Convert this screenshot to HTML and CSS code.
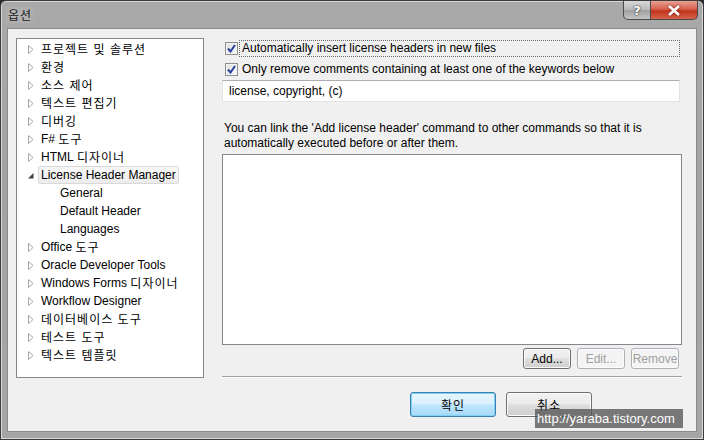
FILE: index.html
```html
<!DOCTYPE html>
<html lang="ko">
<head>
<meta charset="utf-8">
<link rel="stylesheet" href="styles.css">
</head>
<body>
<div class="window">
  <div class="titlebar">
    <span class="title ko">옵션</span>
    <div class="caption">
      <div class="cbtn help">?</div>
      <div class="cbtn close"><svg width="14" height="11" viewBox="0 0 14 11"><path d="M2 1 L12 10 M12 1 L2 10" stroke="#fff" stroke-width="2.6" fill="none"/></svg></div>
    </div>
  </div>
  <div class="client">
    <div class="main">
      <div class="tree">
        <div class="row"><span class="arr"><svg width="6" height="9" viewBox="0 0 6 9"><path d="M0.5 0.5 L5 4.5 L0.5 8.5 Z" fill="#fff" stroke="#a6a6a6"/></svg></span><span class="ko">프로젝트 및 솔루션</span></div>
        <div class="row"><span class="arr"><svg width="6" height="9" viewBox="0 0 6 9"><path d="M0.5 0.5 L5 4.5 L0.5 8.5 Z" fill="#fff" stroke="#a6a6a6"/></svg></span><span class="ko">환경</span></div>
        <div class="row"><span class="arr"><svg width="6" height="9" viewBox="0 0 6 9"><path d="M0.5 0.5 L5 4.5 L0.5 8.5 Z" fill="#fff" stroke="#a6a6a6"/></svg></span><span class="ko">소스 제어</span></div>
        <div class="row"><span class="arr"><svg width="6" height="9" viewBox="0 0 6 9"><path d="M0.5 0.5 L5 4.5 L0.5 8.5 Z" fill="#fff" stroke="#a6a6a6"/></svg></span><span class="ko">텍스트 편집기</span></div>
        <div class="row"><span class="arr"><svg width="6" height="9" viewBox="0 0 6 9"><path d="M0.5 0.5 L5 4.5 L0.5 8.5 Z" fill="#fff" stroke="#a6a6a6"/></svg></span><span class="ko">디버깅</span></div>
        <div class="row"><span class="arr"><svg width="6" height="9" viewBox="0 0 6 9"><path d="M0.5 0.5 L5 4.5 L0.5 8.5 Z" fill="#fff" stroke="#a6a6a6"/></svg></span>F#&nbsp;<span class="ko">도구</span></div>
        <div class="row"><span class="arr"><svg width="6" height="9" viewBox="0 0 6 9"><path d="M0.5 0.5 L5 4.5 L0.5 8.5 Z" fill="#fff" stroke="#a6a6a6"/></svg></span>HTML&nbsp;<span class="ko">디자이너</span></div>
        <div class="row"><span class="arr"><svg width="6" height="9" viewBox="0 0 6 9"><path d="M5.5 2 L5.5 7.5 L0 7.5 Z" fill="#404040"/></svg></span><span class="sel">License Header Manager</span></div>
        <div class="row sub">General</div>
        <div class="row sub">Default Header</div>
        <div class="row sub">Languages</div>
        <div class="row"><span class="arr"><svg width="6" height="9" viewBox="0 0 6 9"><path d="M0.5 0.5 L5 4.5 L0.5 8.5 Z" fill="#fff" stroke="#a6a6a6"/></svg></span>Office&nbsp;<span class="ko">도구</span></div>
        <div class="row"><span class="arr"><svg width="6" height="9" viewBox="0 0 6 9"><path d="M0.5 0.5 L5 4.5 L0.5 8.5 Z" fill="#fff" stroke="#a6a6a6"/></svg></span>Oracle Developer Tools</div>
        <div class="row"><span class="arr"><svg width="6" height="9" viewBox="0 0 6 9"><path d="M0.5 0.5 L5 4.5 L0.5 8.5 Z" fill="#fff" stroke="#a6a6a6"/></svg></span>Windows Forms&nbsp;<span class="ko">디자이너</span></div>
        <div class="row"><span class="arr"><svg width="6" height="9" viewBox="0 0 6 9"><path d="M0.5 0.5 L5 4.5 L0.5 8.5 Z" fill="#fff" stroke="#a6a6a6"/></svg></span>Workflow Designer</div>
        <div class="row"><span class="arr"><svg width="6" height="9" viewBox="0 0 6 9"><path d="M0.5 0.5 L5 4.5 L0.5 8.5 Z" fill="#fff" stroke="#a6a6a6"/></svg></span><span class="ko">데이터베이스 도구</span></div>
        <div class="row"><span class="arr"><svg width="6" height="9" viewBox="0 0 6 9"><path d="M0.5 0.5 L5 4.5 L0.5 8.5 Z" fill="#fff" stroke="#a6a6a6"/></svg></span><span class="ko">테스트 도구</span></div>
        <div class="row"><span class="arr"><svg width="6" height="9" viewBox="0 0 6 9"><path d="M0.5 0.5 L5 4.5 L0.5 8.5 Z" fill="#fff" stroke="#a6a6a6"/></svg></span><span class="ko">텍스트 템플릿</span></div>
      </div>
      <div class="panel">
        <div class="check focus"><span class="cb"><svg width="9" height="9" viewBox="0 0 9 9"><path d="M1 4.5 L3.5 7.5 L8 1" stroke="#2b3f9e" stroke-width="2" fill="none"/></svg></span><span class="lbl">Automatically insert license headers in new files</span></div>
        <div class="check"><span class="cb"><svg width="9" height="9" viewBox="0 0 9 9"><path d="M1 4.5 L3.5 7.5 L8 1" stroke="#2b3f9e" stroke-width="2" fill="none"/></svg></span><span class="lbl">Only remove comments containing at least one of the keywords below</span></div>
        <div class="textbox">license, copyright, (c)</div>
        <p class="desc">You can link the 'Add license header' command to other commands so that it is automatically executed before or after them.</p>
        <div class="list"></div>
        <div class="listbtns">
          <div class="btn">Add...</div>
          <div class="btn disabled">Edit...</div>
          <div class="btn disabled">Remove</div>
        </div>
        <div class="sep"></div>
      </div>
    </div>
    <div class="footer">
      <div class="btn big default"><span class="ko">확인</span></div>
      <div class="btn big"><span class="ko">취소</span></div>
    </div>
  </div>
  <div class="watermark">http://yaraba.tistory.com</div>
</div>
</body>
</html>
```

FILE: styles.css
```css
* { box-sizing: border-box; }
html, body { margin: 0; padding: 0; }
body {
  width: 704px; height: 440px; overflow: hidden;
  font-family: "Liberation Sans", "Noto Sans CJK KR", sans-serif;
  font-size: 12px; color: #000;
  background: #2a2a2a;
}
.ko { font-family: "Noto Sans CJK KR", sans-serif; letter-spacing: 1px; }
.window {
  position: relative;
  width: 704px; height: 440px;
  display: flex; flex-direction: column;
  padding: 0 6px 7px 6px;
  background: linear-gradient(180deg, #a9a9a9 0%, #a3a3a3 40%, #a6a6a6 100%);
  border: 1px solid #3c3c3c;
  border-radius: 6px 6px 0 0;
  box-shadow: inset 0 0 0 1px #d8d8d8;
}
.titlebar {
  height: 27px; flex: none;
  display: flex; align-items: flex-start;
}
.title {
  margin: 5px 0 0 1px;
  font-size: 12px; color: #1a1a1a;
  text-shadow: 0 0 6px #e0e0e0;
}
.caption { margin-left: auto; display: flex; margin-right: -1px; }
.cbtn {
  height: 19px;
  display: flex; align-items: center; justify-content: center;
  border: 1px solid #4a4a4a; border-top: none;
}
.help {
  width: 28px; border-radius: 0 0 0 5px;
  background: linear-gradient(180deg, #d9d9d9 0%, #b8b8b8 50%, #a0a0a0 51%, #c4c4c4 100%);
  color: #fff; font-family: "DejaVu Sans", sans-serif; font-weight: bold; font-size: 13px;
  text-shadow: 0 0 2px #333, 0 0 1px #333;
}
.close {
  width: 47px; border-left: none; border-radius: 0 0 5px 0;
  background: linear-gradient(180deg, #e8a195 0%, #d6604c 45%, #c2341e 55%, #d5634a 100%);
}
.close svg { filter: drop-shadow(0 0 1px #6a1a10); }
.client {
  flex: 1;
  background: #f0f0f0;
  border: 1px solid #8a8a8a;
  display: flex; flex-direction: column;
}
.main { display: flex; padding: 9px 0 0 8px; }
.tree {
  width: 188px; height: 340px; flex: none;
  background: #fff; border: 1px solid #828790;
  padding-top: 1px;
}
.row {
  height: 18px; line-height: 18px;
  display: flex; align-items: center;
  padding-left: 11px; white-space: nowrap;
}
.arr { width: 13px; display: flex; align-items: center; }
.arr svg { display: block; }
.row.sub { padding-left: 43px; }
.sel {
  margin-left: -3px; padding: 0 2px 0 2px;
  height: 18px; line-height: 17px;
  border: 1px solid #d9d9d9; border-radius: 2px;
  background: linear-gradient(180deg, #f8f8f8, #ececec);
}
.panel { margin-left: 18px; width: 460px; display: flex; flex-direction: column; }
.check { display: flex; align-items: center; height: 17px; margin-left: 3px; }
.panel > .check:first-child { margin-top: 2px; }
.check + .check { margin-top: 4px; }
.cb {
  width: 13px; height: 13px; flex: none;
  border: 1px solid #8e8f8f;
  background: linear-gradient(135deg, #dedede, #fafafa);
  display: flex; align-items: center; justify-content: center;
  box-shadow: inset 0 0 0 1px #f4f4f4;
}
.lbl { margin-left: 1px; padding: 0 2px; line-height: 15px; border: 1px dotted transparent; }
.focus .lbl { border-color: #6a6a6a; width: 441px; }
.textbox {
  margin-top: 2px; height: 22px; width: 458px;
  background: #fff; border: 1px solid #e3e3e3; border-top-color: #abadb3;
  padding-left: 6px; line-height: 20px;
}
.desc { margin: 19px 0 0 2px; line-height: 15px; width: 450px; }
.list {
  margin-top: 3px; width: 460px; height: 191px;
  background: #fff; border: 1px solid #828790;
}
.listbtns { display: flex; justify-content: flex-end; gap: 6px; margin-top: 3px; width: 457px; }
.btn {
  width: 48px; height: 21px;
  display: flex; align-items: center; justify-content: center;
  border: 1px solid #707070; border-radius: 3px;
  background: linear-gradient(180deg, #f2f2f2 0%, #ebebeb 48%, #dddddd 52%, #cfcfcf 100%);
  box-shadow: inset 0 0 0 1px #fbfbfb;
}
.btn.disabled { color: #a0a0a0; border-color: #adb2b5; background: #f4f4f4; }
.sep { margin-top: 7px; width: 460px; height: 2px; border-top: 1px solid #a0a0a0; border-bottom: 1px solid #fff; }
.footer { display: flex; gap: 10px; margin: 14px 0 0 402px; }
.btn.big { width: 86px; height: 25px; }
.btn.default {
  border-color: #3c7fb1;
  background: linear-gradient(180deg, #eaf6fd 0%, #d9f0fc 48%, #bee6fd 52%, #a7d9f5 100%);
  box-shadow: inset 0 0 0 1px #7fd0f5;
}
.watermark {
  position: absolute; left: 534px; top: 408px;
  width: 148px; height: 19px;
  background: rgba(80,80,80,0.75);
  color: #fff; font-family: "Liberation Sans", sans-serif; font-size: 13px;
  line-height: 19px; padding-left: 2px;
}
```
